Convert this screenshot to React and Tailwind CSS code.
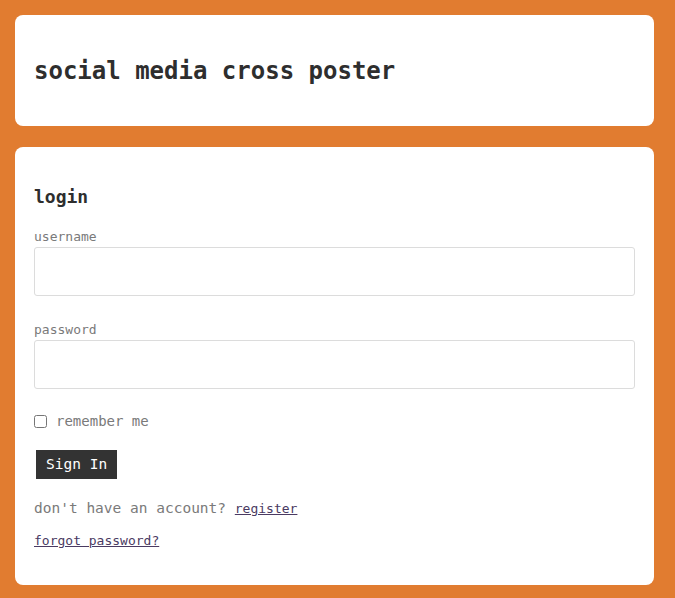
export default function App() {
    return (
        <div className="min-h-[598px] bg-[#e17c30] pl-[15px] pr-[21px] pt-[15px] pb-[14px] font-['DejaVu_Sans_Mono',monospace] text-[#2e2e2e]">
            <div className="bg-white rounded-[8px] h-[111px] flex items-center px-[19px]">
                <h1 className="text-[24px] font-bold leading-none">social media cross poster</h1>
            </div>
            <div className="mt-[21px] bg-white rounded-[8px] px-[19px] pt-[38px] pb-[36px]">
                <h2 className="text-[18px] font-bold leading-[24px]">login</h2>
                <label className="block mt-[20px] text-[13px] leading-[16px] text-[#7a7a7a]">username</label>
                <input type="text" className="mt-[2px] block w-full h-[49px] border border-[#dcdcdc] rounded-[3px] px-2" />
                <label className="block mt-[26px] text-[13px] leading-[16px] text-[#7a7a7a]">password</label>
                <input type="password" className="mt-[2px] block w-full h-[49px] border border-[#dcdcdc] rounded-[3px] px-2" />
                <div className="mt-[23px] flex items-center gap-[9px] h-[18px]">
                    <input type="checkbox" className="w-[13px] h-[13px] m-0" />
                    <span className="text-[14px] text-[#7a7a7a]">remember me</span>
                </div>
                <button className="mt-[20px] ml-[2px] h-[29px] px-[10px] bg-[#333333] text-white text-[14.5px] leading-none">
                    Sign In
                </button>
                <p className="mt-[20px] text-[14.5px] leading-[18px] text-[#7a7a7a]">
                    don't have an account? <a href="#" className="text-[13px] text-[#4a3a62] underline">register</a>
                </p>
                <p className="mt-[15px] text-[13px] leading-[16px]">
                    <a href="#" className="text-[#4a3a62] underline">forgot password?</a>
                </p>
            </div>
        </div>
    );
}
